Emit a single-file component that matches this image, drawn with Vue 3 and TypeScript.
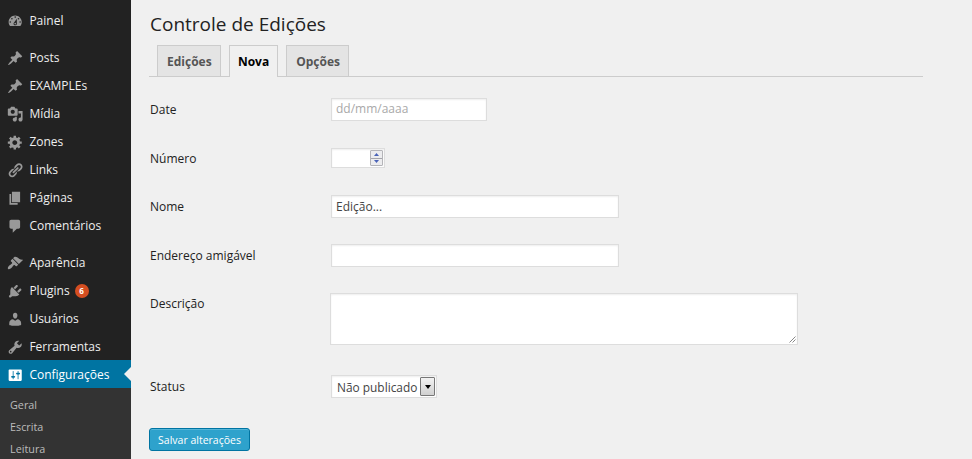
<script setup lang="ts">
import { ref } from 'vue'

interface MenuItem {
  label: string
  icon: string
  badge?: number
  active?: boolean
}

const pin =
  'M10.44 3.02l1.82-1.82 6.36 6.35-1.83 1.82c-1.05-.68-2.48-.57-3.41.36l-.75.75c-.92.93-1.04 2.35-.35 3.41l-1.83 1.82-2.41-2.41-2.8 2.79c-.42.42-3.38 2.71-3.8 2.29s1.86-3.39 2.28-3.81l2.79-2.79L4.1 9.36l1.83-1.82c1.05.69 2.48.57 3.4-.36l.75-.75c.93-.92 1.05-2.35.36-3.41z'

const groups: MenuItem[][] = [
  [
    {
      label: 'Painel',
      icon: 'M3.76 16h12.48c1.1-1.37 1.76-3.11 1.76-5 0-4.42-3.58-8-8-8s-8 3.58-8 8c0 1.89.66 3.63 1.76 5zM10 4c.55 0 1 .45 1 1s-.45 1-1 1-1-.45-1-1 .45-1 1-1zM6 6c.55 0 1 .45 1 1s-.45 1-1 1-1-.45-1-1 .45-1 1-1zm8 0c.55 0 1 .45 1 1s-.45 1-1 1-1-.45-1-1 .45-1 1-1zm-5.37 5.55L12 7v6c0 1.1-.9 2-2 2s-2-.9-2-2c0-.57.24-1.08.63-1.45zM4 10c.55 0 1 .45 1 1s-.45 1-1 1-1-.45-1-1 .45-1 1-1zm12 0c.55 0 1 .45 1 1s-.45 1-1 1-1-.45-1-1 .45-1 1-1zm-5 3c0-.55-.45-1-1-1s-1 .45-1 1 .45 1 1 1 1-.45 1-1z',
    },
  ],
  [
    { label: 'Posts', icon: pin },
    { label: 'EXAMPLEs', icon: pin },
    {
      label: 'Mídia',
      icon: 'M13 11V4c0-.55-.45-1-1-1h-1.67L9 1H5L3.67 3H2c-.55 0-1 .45-1 1v7c0 .55.45 1 1 1h10c.55 0 1-.45 1-1zM7 4.5c1.38 0 2.5 1.12 2.5 2.5S8.38 9.5 7 9.5 4.5 8.38 4.5 7 5.62 4.5 7 4.5zM14 6h5v10.5c0 1.38-1.12 2.5-2.5 2.5S14 17.88 14 16.5s1.12-2.5 2.5-2.5c.17 0 .34.02.5.05V9h-3V6zm-4 8.05V13h2v3.5c0 1.38-1.12 2.5-2.5 2.5S7 17.88 7 16.5 8.12 14 9.5 14c.17 0 .34.02.5.05z',
    },
    {
      label: 'Zones',
      icon: 'M18 12h-2.18c-.17.7-.44 1.35-.81 1.93l1.54 1.54-2.1 2.1-1.54-1.54c-.58.36-1.23.63-1.91.79V19H8v-2.18c-.68-.16-1.33-.43-1.91-.79l-1.54 1.54-2.12-2.12 1.54-1.54c-.36-.58-.63-1.23-.79-1.91H1V9.03h2.17c.16-.7.44-1.35.8-1.94L2.43 5.55l2.1-2.1 1.54 1.54c.58-.37 1.24-.64 1.93-.81V2h3v2.18c.68.16 1.33.43 1.91.79l1.54-1.54 2.12 2.12-1.54 1.54c.36.59.64 1.24.8 1.94H18V12zm-8.5 1.5c1.66 0 3-1.34 3-3s-1.34-3-3-3-3 1.34-3 3 1.34 3 3 3z',
    },
    {
      label: 'Links',
      icon: 'M17.74 2.76c1.68 1.69 1.68 4.41 0 6.1l-1.53 1.52c-1.12 1.12-2.7 1.47-4.14 1.09l2.62-2.61.76-.77.76-.76c.84-.84.84-2.2 0-3.04-.84-.85-2.2-.85-3.04 0l-.77.76-3.38 3.38c-.37-1.44-.02-3.02 1.1-4.14l1.52-1.53c1.69-1.68 4.42-1.68 6.1 0zM8.59 13.43l5.34-5.34c.42-.42.42-1.1 0-1.52-.44-.43-1.13-.39-1.53 0l-5.33 5.34c-.42.42-.42 1.1 0 1.52.44.43 1.13.39 1.52 0zm-.76 2.29l4.14-4.15c.38 1.44.03 3.02-1.09 4.14l-1.52 1.53c-1.69 1.68-4.41 1.68-6.1 0-1.68-1.68-1.68-4.42 0-6.1l1.53-1.52c1.12-1.12 2.7-1.47 4.14-1.1l-4.14 4.15c-.85.84-.85 2.2 0 3.05.84.84 2.2.84 3.04 0z',
    },
    { label: 'Páginas', icon: 'M6 15V2h10v13H6zm-1 1h8v2H3V5h2v11z' },
    {
      label: 'Comentários',
      icon: 'M5 2h9c1.1 0 2 .9 2 2v7c0 1.1-.9 2-2 2h-2l-5 5v-5H5c-1.1 0-2-.9-2-2V4c0-1.1.9-2 2-2z',
    },
  ],
  [
    {
      label: 'Aparência',
      icon: 'M14.48 11.06L7.41 3.99l1.5-1.5c.5-.56 2.3-.47 3.51.32 1.21.8 1.43 1.28 2.91 2.1 1.18.64 2.45 1.26 4.45.85zm-.71.71L6.7 4.7 4.93 6.47c-.39.39-.39 1.02 0 1.41l1.06 1.06c.39.39.39 1.03 0 1.42-.6.6-1.43 1.11-2.21 1.69-.35.26-.7.53-1.01.84C1.43 14.23.4 16.08 1.4 17.07c.99 1 2.84-.03 4.18-1.36.31-.31.58-.66.85-1.02.57-.78 1.08-1.61 1.69-2.21.39-.39 1.02-.39 1.41 0l1.06 1.06c.39.39 1.02.39 1.41 0z',
    },
    {
      label: 'Plugins',
      badge: 6,
      icon: 'M13.11 4.36L9.87 7.6 8 5.73l3.24-3.24c.35-.34 1.05-.2 1.56.32.52.51.66 1.21.31 1.55zm-8 1.77l.91-1.12 9.01 9.01-1.19.84c-.71.71-2.63 1.16-3.82 1.16H6.14L4.9 17.26c-.59.59-1.54.59-2.12 0-.59-.58-.59-1.53 0-2.12l1.24-1.24v-3.88c0-1.13.4-3.19 1.09-3.89zm7.26 3.97l3.24-3.24c.34-.35 1.04-.21 1.55.31.52.51.66 1.21.31 1.55l-3.24 3.25z',
    },
    {
      label: 'Usuários',
      icon: 'M10 9.25c-2.27 0-2.73-3.44-2.73-3.44C7 4.02 7.82 2 9.97 2c2.16 0 2.98 2.02 2.71 3.81 0 0-.41 3.44-2.68 3.44zm0 2.57L12.72 10c2.39 0 4.52 2.33 4.52 4.53v2.49s-3.65 1.13-7.24 1.13c-3.65 0-7.24-1.13-7.24-1.13v-2.49c0-2.25 1.94-4.48 4.47-4.48z',
    },
    {
      label: 'Ferramentas',
      icon: 'M16.68 9.77c-1.34 1.34-3.3 1.67-4.95.99l-5.41 6.52c-.99.99-2.59.99-3.58 0s-.99-2.59 0-3.57l6.52-5.42c-.68-1.65-.35-3.61.99-4.95 1.28-1.28 3.12-1.62 4.72-1.06l-2.89 2.89 2.82 2.82 2.86-2.87c.53 1.58.18 3.39-1.08 4.65zM3.81 16.21c.4.39 1.04.39 1.43 0 .4-.4.4-1.04 0-1.43-.39-.4-1.03-.4-1.43 0-.39.39-.39 1.03 0 1.43z',
    },
    {
      label: 'Configurações',
      active: true,
      icon: 'M18 16V4c0-.55-.45-1-1-1H3c-.55 0-1 .45-1 1v12c0 .55.45 1 1 1h14c.55 0 1-.45 1-1zM8 11h1c.55 0 1 .45 1 1s-.45 1-1 1H8v1.5c0 .28-.22.5-.5.5s-.5-.22-.5-.5V13H6c-.55 0-1-.45-1-1s.45-1 1-1h1V5.5c0-.28.22-.5.5-.5s.5.22.5.5V11zm5-2h-1c-.55 0-1-.45-1-1s.45-1 1-1h1V5.5c0-.28.22-.5.5-.5s.5.22.5.5V7h1c.55 0 1 .45 1 1s-.45 1-1 1h-1v5.5c0 .28-.22.5-.5.5s-.5-.22-.5-.5V9z',
    },
  ],
]

const submenu: string[] = ['Geral', 'Escrita', 'Leitura']
const tabs: string[] = ['Edições', 'Nova', 'Opções']
const current = ref('Nova')

const date = ref('')
const issue = ref('')
const title = ref('Edição...')
const slug = ref('')
const description = ref('')
</script>

<template>
  <div class="admin">
    <nav class="sidebar">
      <ul v-for="(group, g) in groups" :key="g" class="group">
        <li v-for="item in group" :key="item.label" class="item" :class="{ active: item.active }">
          <svg class="icon" viewBox="0 0 20 20"><path :d="item.icon" /></svg>
          <span>{{ item.label }}</span>
          <span v-if="item.badge" class="badge">{{ item.badge }}</span>
        </li>
      </ul>
      <ul class="submenu">
        <li v-for="entry in submenu" :key="entry">{{ entry }}</li>
      </ul>
    </nav>

    <main class="content">
      <h2 class="heading">Controle de Edições</h2>
      <div class="tabs">
        <a
          v-for="tab in tabs"
          :key="tab"
          class="tab"
          :class="{ current: tab === current }"
          @click="current = tab"
        >{{ tab }}</a>
      </div>

      <form class="form" @submit.prevent>
        <div class="row">
          <label for="date">Date</label>
          <input id="date" v-model="date" class="field date" type="text" placeholder="dd/mm/aaaa" />
        </div>
        <div class="row short">
          <label for="issue">Número</label>
          <div class="field number">
            <input id="issue" v-model="issue" type="text" />
            <span class="spinner">
              <span class="step"><svg viewBox="0 0 5 3"><path d="M0 3L2.5 0L5 3z" /></svg></span>
              <span class="step"><svg viewBox="0 0 5 3"><path d="M0 0L2.5 3L5 0z" /></svg></span>
            </span>
          </div>
        </div>
        <div class="row">
          <label for="title">Nome</label>
          <input id="title" v-model="title" class="field wide" type="text" />
        </div>
        <div class="row short">
          <label for="slug">Endereço amigável</label>
          <input id="slug" v-model="slug" class="field wide" type="text" />
        </div>
        <div class="row tall">
          <label for="description">Descrição</label>
          <div class="field area">
            <textarea id="description" v-model="description"></textarea>
            <svg class="grip" viewBox="0 0 7 7"><path d="M.5 6.5l6-6M3.5 6.5l3-3" /></svg>
          </div>
        </div>
        <div class="row">
          <label>Status</label>
          <div class="field select">
            <span>Não publicado</span>
            <span class="arrow"><svg viewBox="0 0 6 4"><path d="M0 0h6L3 4z" /></svg></span>
          </div>
        </div>
        <button class="save" type="submit">Salvar alterações</button>
      </form>
    </main>
  </div>
</template>

<style>
body {
  background: #f0f0f0;
  overflow: hidden;
}
</style>

<style scoped>
.admin {
  display: flex;
  height: 459px;
  overflow: hidden;
  background: #f0f0f0;
  color: #222;
  font: 12px/18px 'Open Sans', sans-serif;
}
.admin * {
  box-sizing: border-box;
}
ul {
  margin: 0;
  padding: 0;
  list-style: none;
}
.sidebar {
  display: flex;
  flex-direction: column;
  gap: 9px;
  flex: none;
  width: 131px;
  padding-top: 6px;
  background: #222;
}
.item {
  position: relative;
  display: flex;
  align-items: center;
  height: 28px;
  padding: 1px 0 0 7px;
  color: #eee;
  font-size: 12px;
  white-space: nowrap;
}
.icon {
  flex: none;
  width: 16.4px;
  height: 16.4px;
  margin: 2px 6px 0 0;
  fill: #999;
}
.badge {
  width: 14px;
  height: 14px;
  margin: 1px 0 0 5px;
  border-radius: 50%;
  background: #d54e21;
  color: #fff;
  font-size: 8px;
  font-weight: 700;
  line-height: 14px;
  text-align: center;
}
.active {
  background: #0074a2;
  color: #fff;
}
.active .icon {
  fill: #fff;
}
.active::after {
  content: '';
  position: absolute;
  top: 7px;
  right: 0;
  border: 7px solid transparent;
  border-left: 0;
  border-right-color: #f0f0f0;
}
.submenu {
  flex: 1;
  margin-top: -9px;
  padding: 6px 0 0 10px;
  background: #333;
  color: #bbb;
  font-size: 10.8px;
  line-height: 22px;
}
.content {
  flex: 1;
  padding: 9px 49px 0 18px;
}
.heading {
  margin: 0;
  height: 36px;
  padding-left: 1px;
  font-size: 19px;
  font-weight: 400;
  line-height: 30px;
}
.tabs {
  display: flex;
  gap: 8px;
  padding-left: 8px;
  border-bottom: 1px solid #ccc;
}
.tab {
  height: 31px;
  padding: 0 8.3px 0 9px;
  border: 1px solid #ccc;
  border-bottom: 0;
  background: #e4e4e4;
  color: #555;
  font-size: 12px;
  font-weight: 700;
  line-height: 32px;
}
.tab.current {
  height: 32px;
  margin-bottom: -1px;
  padding: 0 8px;
  background: #f0f0f0;
  color: #000;
}
.form {
  padding-top: 8px;
}
.row {
  display: flex;
  align-items: center;
  height: 49px;
}
.row.short {
  height: 48px;
}
.row.tall {
  align-items: flex-start;
  height: 83px;
  padding-top: 14px;
}
.row > label {
  flex: none;
  width: 182px;
  padding-left: 1px;
}
.row.short > label {
  padding-top: 2px;
}
.row.tall > label {
  width: 181px;
  padding-top: 2px;
}
.field {
  border: 1px solid #ddd;
  background: #fff;
  box-shadow: inset 0 1px 2px rgba(0, 0, 0, 0.07);
  color: #444;
  font: 12px/18px 'Open Sans', sans-serif;
}
input.field {
  height: 23px;
  padding: 0 4px;
}
input::placeholder {
  color: #a9a9a9;
  opacity: 1;
}
input.date {
  width: 156px;
  padding-bottom: 2px;
}
.wide {
  width: 288px;
}
.number {
  display: flex;
  align-items: center;
  width: 54px;
  height: 20px;
}
.number input {
  width: 38px;
  height: 14px;
  padding: 0 4px;
  border: 0;
  background: none;
}
.spinner {
  display: flex;
  flex-direction: column;
  width: 13px;
  height: 16px;
  border: 1px solid #b4b4b8;
  border-radius: 1px;
}
.step {
  display: flex;
  flex: 1;
  align-items: center;
  justify-content: center;
  background: #ececee;
}
.step + .step {
  border-top: 1px solid #a4a4aa;
}
.step svg {
  width: 5px;
  height: 3px;
  fill: #4a63b8;
}
.area {
  position: relative;
  width: 468px;
  height: 52px;
}
.area textarea {
  display: block;
  width: 100%;
  height: 100%;
  padding: 4px;
  border: 0;
  background: none;
  resize: none;
}
.grip {
  position: absolute;
  right: 1px;
  bottom: 1px;
  width: 7px;
  height: 7px;
  fill: none;
  stroke: #888;
  stroke-width: 1;
}
.select {
  display: flex;
  align-items: center;
  justify-content: space-between;
  width: 106px;
  height: 23px;
  padding: 0 1px 0 5px;
  font-size: 11.9px;
  white-space: nowrap;
}
.arrow {
  display: flex;
  align-items: center;
  justify-content: center;
  width: 15px;
  height: 19px;
  border: 1px solid #777;
  border-radius: 1px;
  background: linear-gradient(#f2f2f2, #d0d0d0);
}
.arrow svg {
  width: 6px;
  height: 4px;
  fill: #000;
}
.save {
  display: block;
  width: 101px;
  height: 23px;
  margin-top: 17px;
  padding: 0;
  border: 1px solid #0074a2;
  border-radius: 3px;
  background: #2ea2cc;
  box-shadow: inset 0 1px 0 rgba(120, 200, 230, 0.5);
  color: #fff;
  font: 10.5px/20px 'Open Sans', sans-serif;
  white-space: nowrap;
}
</style>
